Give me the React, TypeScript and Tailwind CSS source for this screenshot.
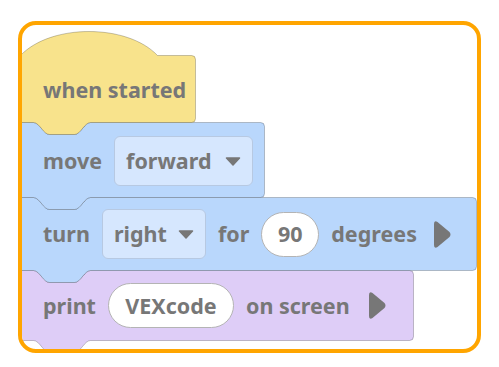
import React from "react";

const TEXT = "text-[#777777] font-bold text-[21.5px] leading-none";

function notchPath(w: number, h: number, hat: boolean) {
  const top = hat
    ? `M0,24 C30,-8 107,-8 137,24 H${w - 4} Q${w},24 ${w},28`
    : `M0,0 H13 C19,0 23,12 29,12 H54 C60,12 64,0 70,0 H${w - 4} Q${w},0 ${w},4`;
  const bottom = `V${h - 4} Q${w},${h} ${w - 4},${h} H70 C64,${h} 60,${h + 12} 54,${h + 12} H29 C23,${h + 12} 19,${h} 13,${h} H0 Z`;
  return top + " " + bottom;
}

function Block({
  w,
  h,
  fill,
  className,
  innerClass,
  hat = false,
  children,
}: {
  w: number;
  h: number;
  fill: string;
  className: string;
  innerClass: string;
  hat?: boolean;
  children: React.ReactNode;
}) {
  return (
    <div className={`relative -ml-[2px] shrink-0 ${className}`}>
      <svg
        className="pointer-events-none absolute left-0 top-0 overflow-visible"
        width={w}
        height={h + 12}
      >
        <path
          d={notchPath(w, h, hat)}
          fill={fill}
          stroke="#000"
          strokeOpacity={0.22}
          strokeWidth={1}
          transform="translate(0.5,0.5)"
        />
      </svg>
      <div className={`relative flex h-full items-center gap-3 pl-[23px] ${TEXT} ${innerClass}`}>
        {children}
      </div>
    </div>
  );
}

function Caret() {
  return (
    <svg width="16" height="9" viewBox="0 0 16 9">
      <path
        d="M1.5 1 H14.5 L8 8 Z"
        fill="#777777"
        stroke="#777777"
        strokeLinejoin="round"
        strokeWidth="1.5"
      />
    </svg>
  );
}

function Play() {
  return (
    <svg width="19" height="29" viewBox="0 0 19 29">
      <path
        d="M1 4 Q1 0 4.5 2 L16.5 12 Q18.5 14.5 16.5 17 L4.5 27 Q1 29 1 25 Z"
        fill="#777777"
      />
    </svg>
  );
}

function Dropdown({ label, className }: { label: string; className: string }) {
  return (
    <div
      className={`flex h-[50px] items-center justify-between rounded-[6px] border border-[#b7c9e2] bg-[#d6e7fe] px-[11px] ${className}`}
    >
      <span>{label}</span>
      <Caret />
    </div>
  );
}

function Oval({ label, className }: { label: string; className: string }) {
  return (
    <div
      className={`flex h-[45px] items-center justify-center rounded-full border border-[#b4b4b4] bg-white ${className}`}
    >
      <span>{label}</span>
    </div>
  );
}

export default function App() {
  return (
    <div className="h-[367px] w-[499px] bg-white pl-[18px] pt-[21px] font-['Noto_Sans','Open_Sans',sans-serif]">
      <div className="flex h-[332px] w-[463px] flex-col overflow-hidden rounded-[18px] border-4 border-[#ffa500] bg-white pt-[6px]">
        <Block w={175} h={91} fill="#f8e38c" hat className="z-[4] h-[91px] w-[175px]" innerClass="pt-[26px]">
          <span>when started</span>
        </Block>
        <Block w={244} h={75} fill="#b9d7fc" className="z-[3] h-[75px] w-[244px]" innerClass="pt-[3px]">
          <span>move</span>
          <Dropdown label="forward" className="w-[139px]" />
        </Block>
        <Block w={456} h={73} fill="#b9d7fc" className="z-[2] h-[73px] w-[456px]" innerClass="pt-[1px]">
          <span>turn</span>
          <Dropdown label="right" className="w-[104px]" />
          <span>for</span>
          <Oval label="90" className="w-[58px]" />
          <span>degrees</span>
          <span className="ml-[4px] flex">
            <Play />
          </span>
        </Block>
        <Block w={393} h={70} fill="#decdf7" className="z-[1] h-[70px] w-[393px]" innerClass="pt-[1px]">
          <span>print</span>
          <Oval label="VEXcode" className="w-[126px]" />
          <span>on screen</span>
          <span className="ml-[6px] flex">
            <Play />
          </span>
        </Block>
      </div>
    </div>
  );
}
